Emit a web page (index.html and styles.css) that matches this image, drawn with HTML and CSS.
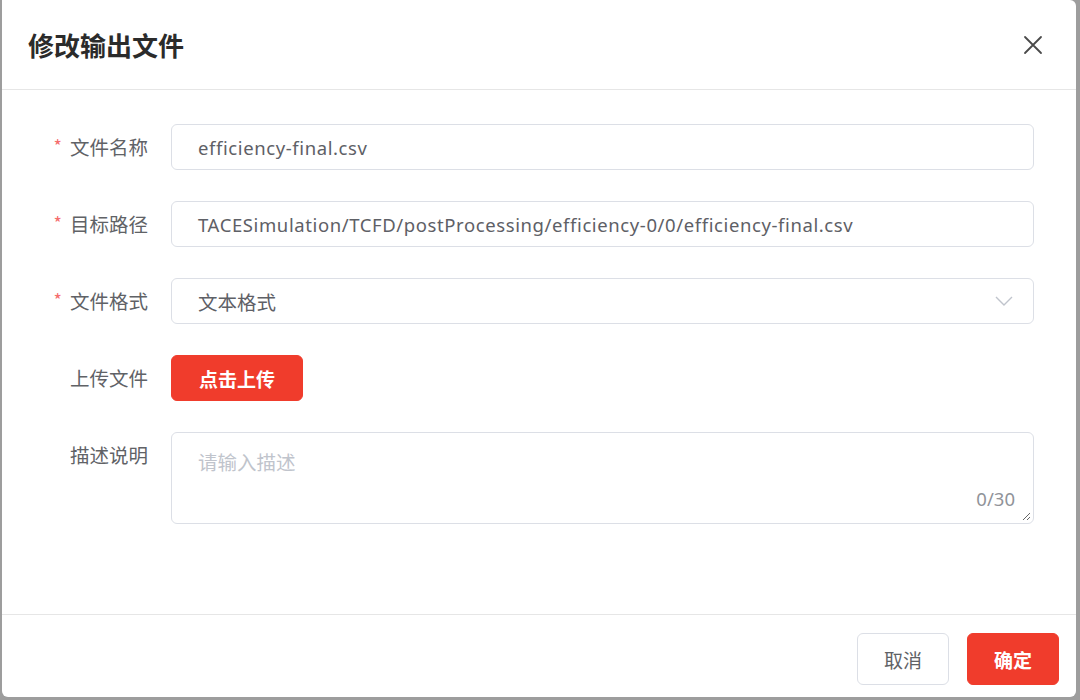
FILE: index.html
```html
<!DOCTYPE html>
<html lang="zh-CN">
<head>
<meta charset="utf-8">
<title>修改输出文件</title>
<link rel="stylesheet" href="styles.css">
</head>
<body>
<div class="dialog">
  <div class="dialog-header">
    <div class="dialog-title">修改输出文件</div>
    <span class="close" aria-label="关闭">
      <svg width="20" height="20" viewBox="0 0 20 20"><path d="M2 2 L18 18 M18 2 L2 18" stroke="#4a4a4a" stroke-width="1.8" fill="none" stroke-linecap="round"/></svg>
    </span>
  </div>
  <div class="dialog-body">
    <div class="form-row">
      <label class="form-label required">文件名称</label>
      <div class="field input">efficiency-final.csv</div>
    </div>
    <div class="form-row">
      <label class="form-label required">目标路径</label>
      <div class="field input">TACESimulation/TCFD/postProcessing/efficiency-0/0/efficiency-final.csv</div>
    </div>
    <div class="form-row">
      <label class="form-label required">文件格式</label>
      <div class="field input select">
        <span class="cjk">文本格式</span>
        <svg class="arrow" width="18" height="10" viewBox="0 0 18 10"><path d="M1 1 L9 9 L17 1" stroke="#c0c4cc" stroke-width="1.4" fill="none"/></svg>
      </div>
    </div>
    <div class="form-row">
      <label class="form-label">上传文件</label>
      <div><button class="btn btn-primary upload">点击上传</button></div>
    </div>
    <div class="form-row">
      <label class="form-label">描述说明</label>
      <div class="field textarea">
        <span class="placeholder">请输入描述</span>
        <span class="count">0/30</span>
        <svg class="resize" width="10" height="10" viewBox="0 0 10 10"><path d="M9 2 L2 9 M9 6 L6 9" stroke="#666" stroke-width="1" fill="none"/></svg>
      </div>
    </div>
  </div>
  <div class="dialog-footer">
    <button class="btn btn-default">取消</button>
    <button class="btn btn-primary">确定</button>
  </div>
</div>
</body>
</html>
```
FILE: styles.css
```css
html, body {
  margin: 0;
  padding: 0;
}
body {
  width: 1080px;
  height: 700px;
  background: #9d9d9d;
  display: flex;
  font-family: "Noto Sans", "Noto Sans CJK SC", sans-serif;
  color: #606266;
  overflow: hidden;
}
.dialog {
  flex: 1;
  margin: 0 4px 3px 2px;
  background: #fff;
  border-radius: 0 6px 6px 6px;
  display: flex;
  flex-direction: column;
}
.dialog-header {
  height: 89px;
  border-bottom: 1px solid #e6e6e6;
  display: flex;
  align-items: center;
  justify-content: space-between;
  padding: 0 33px 0 26px;
}
.dialog-title {
  font-family: "Noto Sans CJK SC", sans-serif;
  font-size: 26px;
  font-weight: 700;
  color: #2b2b2b;
}
.close {
  display: flex;
  width: 20px;
  height: 20px;
}
.dialog-body {
  flex: 1;
  padding: 34px 42px 0 0;
  display: flex;
  flex-direction: column;
  gap: 31px;
}
.form-row {
  display: grid;
  grid-template-columns: 146px 1fr;
  column-gap: 23px;
}
.form-label {
  font-family: "Noto Sans CJK SC", sans-serif;
  font-size: 19.5px;
  line-height: 46px;
  text-align: right;
  color: #606266;
}
.form-label.required::before {
  content: "*";
  color: #f56c6c;
  margin-right: 8px;
  font-size: 18px;
  position: relative;
  top: -2px;
}
.field {
  border: 1px solid #dcdfe6;
  border-radius: 6px;
  box-sizing: border-box;
}
.input {
  height: 46px;
  display: flex;
  align-items: center;
  padding: 0 20px 0 26px;
  font-size: 18.5px;
  letter-spacing: 0.6px;
  color: #5e6066;
}
.cjk {
  font-family: "Noto Sans CJK SC", sans-serif;
  font-size: 19.5px;
  letter-spacing: 0;
}
.select {
  justify-content: space-between;
}
.textarea {
  height: 92px;
  position: relative;
  padding: 14px 26px;
}
.placeholder {
  font-family: "Noto Sans CJK SC", sans-serif;
  font-size: 19.5px;
  color: #c0c4cc;
}
.count {
  position: absolute;
  right: 18px;
  bottom: 12px;
  font-size: 18.5px;
  color: #909399;
}
.resize {
  position: absolute;
  right: 2px;
  bottom: 2px;
}
.btn {
  font-family: "Noto Sans CJK SC", sans-serif;
  font-size: 19px;
  border-radius: 6px;
  cursor: pointer;
  box-sizing: border-box;
}
.btn-primary {
  background: #f03c2c;
  border: 1px solid #f03c2c;
  color: #fff;
  font-weight: 700;
}
.btn-default {
  background: #fff;
  border: 1px solid #dcdfe6;
  color: #606266;
}
.upload {
  width: 132px;
  height: 46px;
}
.dialog-footer {
  border-top: 1px solid #e6e6e6;
  padding: 18px 17px 0 0;
  height: 83px;
  box-sizing: border-box;
  display: flex;
  justify-content: flex-end;
  gap: 18px;
}
.dialog-footer .btn {
  width: 92px;
  height: 52px;
}
```
